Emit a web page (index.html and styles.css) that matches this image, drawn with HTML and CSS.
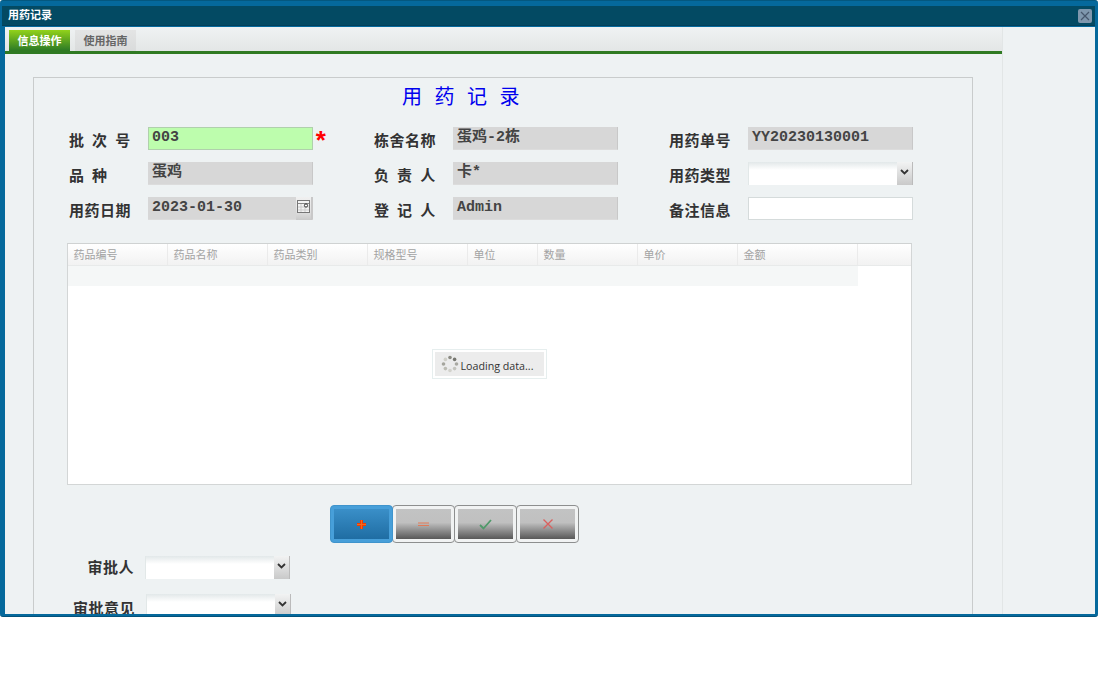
FILE: index.html
```html
<!DOCTYPE html>
<html lang="zh">
<head>
<meta charset="utf-8">
<title>用药记录</title>
<link rel="stylesheet" href="styles.css">
</head>
<body>
<div class="window">
  <div class="titlebar">
    <span class="title-text">用药记录</span>
    <span class="close"><svg width="10" height="10" viewBox="0 0 10 10"><path d="M1 1L9 9M9 1L1 9" stroke="#46566b" stroke-width="1.2" fill="none"/></svg></span>
  </div>
  <div class="body">
    <div class="main">
      <div class="tabs">
        <span class="tab tab-active">信息操作</span>
        <span class="tab">使用指南</span>
      </div>
      <div class="panel">
        <h1 class="heading">用 药 记 录</h1>
        <div class="form-grid">
          <div class="cell"><label class="lbl">批 次 号</label><div class="field field-green">003</div><span class="star">*</span></div>
          <div class="cell"><label class="lbl">栋舍名称</label><div class="field field-ro">蛋鸡-2栋</div></div>
          <div class="cell"><label class="lbl">用药单号</label><div class="field field-ro">YY20230130001</div></div>

          <div class="cell"><label class="lbl">品 种</label><div class="field field-ro">蛋鸡</div></div>
          <div class="cell"><label class="lbl">负 责 人</label><div class="field field-ro">卡*</div></div>
          <div class="cell"><label class="lbl">用药类型</label><div class="field select"><span class="arrow"><svg width="9" height="6" viewBox="0 0 9 6"><path d="M1 1L4.5 4.5L8 1" stroke="#333" stroke-width="1.8" fill="none"/></svg></span></div></div>

          <div class="cell"><label class="lbl">用药日期</label><div class="field field-ro field-date">2023-01-30<span class="cal"><svg width="13" height="13" viewBox="0 0 13 13"><rect x="0.5" y="0.5" width="12" height="12" fill="#f4f4f4" stroke="#777"/><path d="M1 3.5H12" stroke="#888"/><path d="M1 7H12M1 10H12M4 4V12M8 4V12" stroke="#ccc"/><circle cx="9" cy="5.5" r="1.6" fill="#fff" stroke="#333"/></svg></span></div></div>
          <div class="cell"><label class="lbl">登 记 人</label><div class="field field-ro">Admin</div></div>
          <div class="cell"><label class="lbl">备注信息</label><div class="field field-plain"></div></div>
        </div>

        <div class="table">
          <div class="thead">
            <span class="th w100">药品编号</span>
            <span class="th w100">药品名称</span>
            <span class="th w100">药品类别</span>
            <span class="th w100">规格型号</span>
            <span class="th w70">单位</span>
            <span class="th w100">数量</span>
            <span class="th w100">单价</span>
            <span class="th w120">金额</span>
          </div>
          <div class="trow"></div>
          <div class="tbody">
            <div class="loading">
              <div class="loading-inner">
                <svg width="18" height="18" viewBox="0 0 18 18"><g>
                  <circle cx="9" cy="2.5" r="1.8" fill="#8b8b83"/>
                  <circle cx="13.6" cy="4.4" r="1.8" fill="#777770"/>
                  <circle cx="15.5" cy="9" r="1.8" fill="#a9a9a2"/>
                  <circle cx="13.6" cy="13.6" r="1.8" fill="#c4c4be"/>
                  <circle cx="9" cy="15.5" r="1.8" fill="#d2d2cc"/>
                  <circle cx="4.4" cy="13.6" r="1.8" fill="#bcbcb4"/>
                  <circle cx="2.5" cy="9" r="1.8" fill="#a5a59d"/>
                  <circle cx="4.4" cy="4.4" r="1.8" fill="#cfcfc8"/>
                </g></svg>
                <span class="loading-text">Loading data...</span>
              </div>
            </div>
          </div>
        </div>

        <div class="actions">
          <button class="btn btn-on" type="button"><span class="btn-face"><svg class="ico" width="9" height="9" viewBox="0 0 9 9"><rect x="0" y="3" width="9" height="1" fill="#f03c00"/><rect x="0" y="5" width="9" height="1" fill="#f03c00"/><rect x="3" y="0" width="1" height="9" fill="#f03c00"/><rect x="5" y="0" width="1" height="9" fill="#f03c00"/><rect x="0" y="4" width="9" height="1" fill="#f06a20"/><rect x="4" y="0" width="1" height="9" fill="#f06a20"/></svg></span></button>
          <button class="btn" type="button"><span class="btn-face"><svg class="ico" width="11" height="5" viewBox="0 0 11 5"><path d="M0 1H11M0 3.5H11" stroke="#e07a58" stroke-width="1" fill="none"/></svg></span></button>
          <button class="btn" type="button"><span class="btn-face"><svg class="ico" width="13" height="11" viewBox="0 0 13 11"><path d="M1 6L4.5 9.5L12 1" stroke="#4f9a6a" stroke-width="1.8" fill="none"/></svg></span></button>
          <button class="btn" type="button"><span class="btn-face"><svg class="ico" width="10" height="10" viewBox="0 0 10 10"><path d="M0.5 0.5L9.5 9.5M9.5 0.5L0.5 9.5" stroke="#d9615f" stroke-width="1.4" fill="none"/></svg></span></button>
        </div>

        <div class="approve">
          <label class="lbl-a">审批人</label>
          <div class="field select select-a"><span class="arrow"><svg width="9" height="6" viewBox="0 0 9 6"><path d="M1 1L4.5 4.5L8 1" stroke="#333" stroke-width="1.8" fill="none"/></svg></span></div>
        </div>
        <div class="approve approve-2">
          <label class="lbl-a">审批意见</label>
          <div class="field select select-a"><span class="arrow"><svg width="9" height="6" viewBox="0 0 9 6"><path d="M1 1L4.5 4.5L8 1" stroke="#333" stroke-width="1.8" fill="none"/></svg></span></div>
        </div>
      </div>
    </div>
  </div>
</div>
</body>
</html>
```

FILE: styles.css
```css
* { box-sizing: border-box; }
html, body { margin: 0; padding: 0; background: #fff; }
body { height: 692px; overflow: hidden; font-family: "Noto Sans CJK SC", "Liberation Sans", sans-serif; }

.window {
  width: 1098px;
  height: 617px;
  display: flex;
  flex-direction: column;
  background: #05699c;
  border-radius: 3px;
  border-top: 1px solid #04587f;
  border-bottom: 1px solid #04527a;
  overflow: hidden;
}
.titlebar {
  flex: none;
  height: 20px;
  margin-top: 5px;
  margin-right: 3px;
  margin-left: 2px;
  background: #034a63;
  display: flex;
  align-items: center;
  justify-content: space-between;
  padding: 0 3px 0 6px;
  border-bottom: 1px solid #03405a;
}
.title-text { color: #fff; font-size: 11px; font-weight: 700; line-height: 16px; padding-bottom: 3px; }
.close {
  width: 14px;
  height: 14px;
  background: #7f97ad;
  border-radius: 2px;
  display: flex;
  align-items: center;
  justify-content: center;
}
.body {
  flex: 1;
  min-height: 0;
  margin: 1px 3px 2px 5px;
  background: #eef2f3;
  overflow: hidden;
}
.main {
  width: 998px;
  height: 100%;
  border-right: 1px solid #e2e6e6;
  overflow: hidden;
}

.tabs {
  height: 27px;
  display: flex;
  align-items: flex-end;
  gap: 5px;
  padding: 0 0 0 4px;
  border-bottom: 3px solid #2f7a22;
  background: linear-gradient(#eff2f3, #e3e6e6);
}
.tab {
  width: 61px;
  height: 21px;
  background: linear-gradient(#e4e5e5, #d9dbdb);
  color: #666;
  font-size: 11px;
  font-weight: 700;
  line-height: 21px;
  text-align: center;
}
.tab-active {
  background: linear-gradient(#92d21a, #2f7d25);
  color: #fff;
  border-bottom: 1px solid #2f7a22;
}

.panel {
  width: 940px;
  height: 600px;
  margin: 23px 0 0 28px;
  border: 1px solid #c9cccc;
  border-bottom: none;
  background: #eef2f3;
}
.heading {
  margin: 3px 0 0;
  height: 31px;
  font-family: "Noto Sans CJK SC", sans-serif;
  font-size: 20px;
  font-weight: 400;
  line-height: 29px;
  color: #0000ee;
  letter-spacing: 4px;
  padding-left: 368px;
}
.form-grid {
  display: grid;
  grid-template-columns: 305px 295px 300px;
  grid-auto-rows: 23px;
  row-gap: 12px;
  margin: 15px 0 0 35px;
}
.cell { display: flex; align-items: flex-start; }
.lbl {
  width: 79px;
  flex: none;
  font-size: 15px;
  font-weight: 700;
  letter-spacing: 0.5px;
  word-spacing: 3.7px;
  line-height: 20px;
  padding-top: 3px;
  color: #333;
  white-space: pre;
}
.field {
  width: 165px;
  height: 23px;
  flex: none;
  padding: 1px 4px 0;
  font-family: "Liberation Mono", "Noto Sans CJK SC", monospace;
  font-size: 15px;
  font-weight: 700;
  line-height: 20px;
  color: #444;
}
.field-green { background: #bdfdad; border: 1px solid #b0d0ac; padding: 0 3px; line-height: 19px; }
.field-ro { background: #d7d7d7; border-bottom: 1px solid #dcdcdc; border-right: 1px solid #c8c8c8; }
.field-plain { background: #fff; border: 1px solid #d5dbdb; }
.field-date { position: relative; }
.cal {
  position: absolute;
  right: 0;
  top: 0;
  width: 16px;
  height: 23px;
  background: linear-gradient(#f0f0f0 0, #e2e2e2 60%, #c9c9c9 100%);
  border-right: 1px solid #c8c8c8;
  padding: 3px 0 0 1px;
  line-height: 0;
}
.star { color: #f00; font: 700 26px/32px "Liberation Mono", monospace; margin-left: 0; }
.select {
  background: linear-gradient(#e2e8e9 0, #ffffff 8px);
  border-left: 1px solid #e2e8e8;
  padding: 0;
  display: flex;
  justify-content: flex-end;
}
.arrow {
  width: 16px;
  height: 23px;
  background: linear-gradient(#f2f3f3, #c9c9c9);
  border-right: 1px solid #bbb;
  display: flex;
  justify-content: center;
  padding-top: 7px;
}
.select .arrow svg { display: block; }

.table {
  width: 845px;
  height: 242px;
  margin: 23px 0 0 33px;
  background: #fff;
  border: 1px solid #d3d6d6;
  border-top-color: #cfd2d2;
  display: flex;
  flex-direction: column;
}
.thead {
  flex: none;
  height: 22px;
  display: flex;
  background: linear-gradient(#fff, #f2f2f2);
  border-bottom: 1px solid #e8eaea;
}
.th {
  height: 100%;
  padding-left: 5.5px;
  font-size: 11px;
  line-height: 21px;
  color: #a3a3a3;
  border-right: 1px solid #ebebeb;
}
.w100 { width: 100px; }
.w70 { width: 70px; }
.w120 { width: 120px; }
.trow { flex: none; height: 20px; width: 790px; background: #f5f7f7; }
.tbody {
  flex: 1;
  display: flex;
  align-items: flex-start;
  justify-content: center;
  padding: 63px 0 0 0;
}
.loading {
  width: 115px;
  height: 30px;
  padding: 2px;
  background: #fff;
  border: 1px solid #e6eeee;
  margin-left: -1px;
}
.loading-inner {
  height: 100%;
  background: #ececec;
  display: flex;
  align-items: center;
  gap: 2px;
  padding-left: 6px;
}
.loading-text {
  font-family: "Open Sans", "Liberation Sans", sans-serif;
  font-size: 10.7px;
  color: #333;
  padding-top: 3px;
}

.actions {
  display: flex;
  margin: 20px 0 0 296px;
  height: 38px;
}
.btn {
  width: 63px;
  height: 38px;
  margin: 0 -1px 0 0;
  padding: 3px;
  border: 1px solid #8d8f8f;
  border-radius: 4px;
  background: #f1f3f3;
  display: block;
}
.btn-face {
  display: flex;
  align-items: center;
  justify-content: center;
  width: 100%;
  height: 100%;
  background: linear-gradient(#c2c3c3 0, #c0c0c0 45%, #585858 100%);
}
.ico { flex: none; display: block; }
.btn-on { background: #479fd9; border-color: #3f94cc; position: relative; }
.btn-on .btn-face { background: linear-gradient(#3a8fc8, #1f6da3); }

.approve {
  display: flex;
  align-items: flex-start;
  margin: 13px 0 0 0;
  height: 23px;
}
.approve-2 { margin-top: 15px; padding-left: 1px; }
.lbl-a {
  width: 100px;
  flex: none;
  font-size: 15px;
  font-weight: 700;
  letter-spacing: 0.5px;
  line-height: 20px;
  padding-top: 1px;
  text-align: right;
  color: #333;
}
.select-a { margin-left: 11px; width: 145px; padding: 0; }
.approve-2 .lbl-a { padding-top: 4px; }
```
